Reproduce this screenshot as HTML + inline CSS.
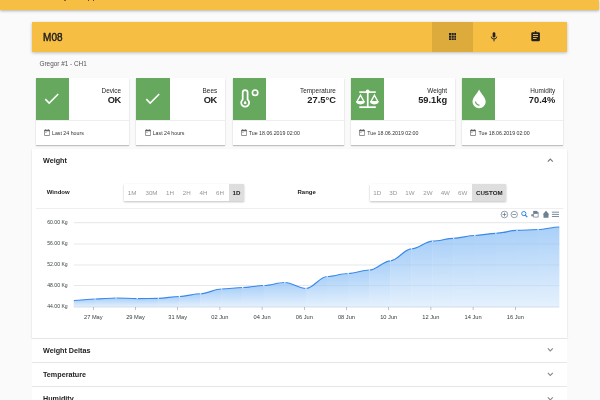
<!DOCTYPE html>
<html><head><meta charset="utf-8">
<style>
*{box-sizing:border-box;margin:0;padding:0}
html,body{width:600px;height:400px;overflow:hidden;background:#fafafa;font-family:"Liberation Sans",sans-serif;color:#222}
.abs{position:absolute}
#appbar{left:0;top:0;width:599px;height:10px;background:#f6bf43;box-shadow:0 1px 3px rgba(0,0,0,.3)}
#toolbar{left:32px;top:21.5px;width:535px;height:30.4px;background:#f6bf43;box-shadow:0 1px 3px rgba(0,0,0,.25)}
#toolbar .title{position:absolute;left:11px;top:10.3px;font-size:10px;font-weight:normal;-webkit-text-stroke:0.4px #1d1d1d;color:#1d1d1d;letter-spacing:0.1px}
.tbtn{position:absolute;top:0;height:30.4px;width:41px}
.tbtn.active{background:rgba(0,0,0,.1)}
.sub{left:39.5px;top:59.6px;font-size:6.4px;color:#555}
.card{position:absolute;top:77.7px;height:67px;background:#fff;box-shadow:0 1px 1px rgba(0,0,0,.18),0 0.5px 2px rgba(0,0,0,.1)}
.card .g{position:absolute;left:0;top:0;width:33.2px;height:42.1px;background:#66a85e}
.card .dv{position:absolute;left:0;right:0;top:42.2px;height:1px;background:#eee}
.card .lbl{position:absolute;right:7.9px;top:9.6px;font-size:6.4px;color:#2a2a2a;text-align:right;white-space:nowrap}
.card .val{position:absolute;right:7.9px;top:17.5px;font-size:9.3px;font-weight:bold;color:#222;text-align:right;white-space:nowrap}
.card .ft{position:absolute;left:7.9px;padding-left:8.4px;top:52.6px;font-size:5.25px;color:#333;white-space:nowrap}
.panel{position:absolute;left:32px;width:535px;background:#fff;box-shadow:0 1px 2px rgba(0,0,0,.15)}
.ph{position:absolute;left:11px;font-size:7.2px;font-weight:bold;color:#222}
.lab{position:absolute;font-size:6px;font-weight:bold;color:#222}
.bg{position:absolute;top:184.3px;height:16.6px;background:#fff;box-shadow:0 1px 2px rgba(0,0,0,.25)}
.bg .on{position:absolute;top:0;height:16.6px;background:#dedede}
.bg span{position:absolute;top:0.9px;width:30px;height:16.6px;line-height:16.6px;font-size:6.2px;color:#969696;text-align:center;white-space:nowrap}
.bg span.act{color:#222;font-weight:bold}
</style></head>
<body>
<div id="wrap" style="position:absolute;left:0;top:0;width:600px;height:400px;will-change:transform">
<div id="appbar" class="abs"><div class="abs" style="left:63.6px;top:0;width:2.2px;height:1.2px;border-radius:0 0 1px 1px;background:#5a4a20"></div><div class="abs" style="left:87.6px;top:0;width:1.4px;height:1.2px;background:#5a4a20"></div><div class="abs" style="left:92.8px;top:0;width:1.4px;height:1.2px;background:#5a4a20"></div></div>
<div id="toolbar" class="abs">
  <div class="title">M08</div>
  <div class="tbtn active" style="left:400px">
    <svg class="abs" style="left:16.8px;top:11.5px" width="7.4" height="7.4" viewBox="0 0 7.4 7.4" fill="#222">
      <rect x="0" y="0" width="2.1" height="2.1"/><rect x="2.65" y="0" width="2.1" height="2.1"/><rect x="5.3" y="0" width="2.1" height="2.1"/>
      <rect x="0" y="2.65" width="2.1" height="2.1"/><rect x="2.65" y="2.65" width="2.1" height="2.1"/><rect x="5.3" y="2.65" width="2.1" height="2.1"/>
      <rect x="0" y="5.3" width="2.1" height="2.1"/><rect x="2.65" y="5.3" width="2.1" height="2.1"/><rect x="5.3" y="5.3" width="2.1" height="2.1"/>
    </svg>
  </div>
  <div class="tbtn" style="left:441px">
    <svg class="abs" style="left:0;top:0" width="41" height="30.4" viewBox="473 21.5 41 30.4" fill="#222">
      <rect x="492.65" y="31.7" width="2.7" height="5.3" rx="1.35"/>
      <path d="M491.3 36.1v0.3a2.7 2.1 0 0 0 5.4 0v-0.3" stroke="#222" stroke-width="0.9" fill="none"/>
      <rect x="493.55" y="38.3" width="0.9" height="2.6"/>
    </svg>
  </div>
  <div class="tbtn" style="left:482px">
    <svg class="abs" style="left:0;top:0" width="41" height="30.4" viewBox="514 21.5 41 30.4" fill="#222">
      <rect x="531.3" y="31.8" width="8.6" height="9" rx="1.2"/>
      <circle cx="535.6" cy="31.5" r="0.9"/>
      <rect x="533" y="33.6" width="5" height="0.9" fill="#f6bf43"/>
      <rect x="533" y="35.6" width="5" height="0.9" fill="#f6bf43"/>
      <rect x="533" y="37.6" width="3.6" height="0.9" fill="#f6bf43"/>
    </svg>
  </div>
</div>
<div class="abs sub">Gregor #1 - CH1</div>
<div class="card" style="left:35.7px;width:93.3px">
  <div class="g"><svg class="abs" style="left:6.8px;top:11.5px" width="19.2" height="19.2" viewBox="0 0 24 24"><path d="M9 16.2L4.8 12l-1.4 1.4L9 19 21 7l-1.4-1.4L9 16.2z" fill="#fff"/></svg></div><div class="dv"></div>
  <div class="lbl">Device</div><div class="val" style="letter-spacing:-0.5px;right:8.3px">OK</div>
  <div class="ft"><svg width="6.1" height="6.9" viewBox="0 0 6.1 6.9" style="position:absolute;left:0.25px;top:-1.2px"><rect x="0.4" y="1.1" width="5.3" height="5.4" rx="0.4" fill="none" stroke="#555" stroke-width="0.65"/><rect x="0.4" y="1.1" width="5.3" height="1.15" fill="#555"/><rect x="1.2" y="0.3" width="0.6" height="0.9" fill="#555"/><rect x="4.3" y="0.3" width="0.6" height="0.9" fill="#555"/><rect x="1.1" y="3.1" width="1.5" height="0.55" fill="#777"/></svg>Last 24 hours</div>
</div>
<div class="card" style="left:136.4px;width:88.7px">
  <div class="g"><svg class="abs" style="left:6.8px;top:11.5px" width="19.2" height="19.2" viewBox="0 0 24 24"><path d="M9 16.2L4.8 12l-1.4 1.4L9 19 21 7l-1.4-1.4L9 16.2z" fill="#fff"/></svg></div><div class="dv"></div>
  <div class="lbl">Bees</div><div class="val" style="letter-spacing:-0.5px;right:8.3px">OK</div>
  <div class="ft"><svg width="6.1" height="6.9" viewBox="0 0 6.1 6.9" style="position:absolute;left:0.25px;top:-1.2px"><rect x="0.4" y="1.1" width="5.3" height="5.4" rx="0.4" fill="none" stroke="#555" stroke-width="0.65"/><rect x="0.4" y="1.1" width="5.3" height="1.15" fill="#555"/><rect x="1.2" y="0.3" width="0.6" height="0.9" fill="#555"/><rect x="4.3" y="0.3" width="0.6" height="0.9" fill="#555"/><rect x="1.1" y="3.1" width="1.5" height="0.55" fill="#777"/></svg>Last 24 hours</div>
</div>
<div class="card" style="left:232.5px;width:111.25px">
  <div class="g"><svg class="abs" style="left:0;top:0" width="33.5" height="41.5" viewBox="232.5 78.1 33.5 41.5"><path d="M242.2 99.7V92.6A2.45 2.45 0 0 1 247.1 92.6V99.7A3.98 3.98 0 1 1 242.2 99.7Z" fill="none" stroke="#fff" stroke-width="1.75"/><path d="M244.65 100.6l-1.2 2a1.3 1.3 0 1 0 2.4 0z" fill="#fff"/><circle cx="254.6" cy="92.75" r="2.7" fill="none" stroke="#fff" stroke-width="1.6"/></svg></div><div class="dv"></div>
  <div class="lbl">Temperature</div><div class="val">27.5°C</div>
  <div class="ft"><svg width="6.1" height="6.9" viewBox="0 0 6.1 6.9" style="position:absolute;left:0.25px;top:-1.2px"><rect x="0.4" y="1.1" width="5.3" height="5.4" rx="0.4" fill="none" stroke="#555" stroke-width="0.65"/><rect x="0.4" y="1.1" width="5.3" height="1.15" fill="#555"/><rect x="1.2" y="0.3" width="0.6" height="0.9" fill="#555"/><rect x="4.3" y="0.3" width="0.6" height="0.9" fill="#555"/><rect x="1.1" y="3.1" width="1.5" height="0.55" fill="#777"/></svg>Tue 18.06.2019 02:00</div>
</div>
<div class="card" style="left:351px;width:104px">
  <div class="g"><svg class="abs" style="left:0;top:0" width="33.5" height="41.5" viewBox="351 77.8 33.5 41.5" fill="#fff"><rect x="359.3" y="91.1" width="16.5" height="1.6"/><circle cx="367.7" cy="91.3" r="1.9"/><rect x="366.9" y="92" width="1.7" height="14.5"/><rect x="359.3" y="106.1" width="16.5" height="1.75"/><path d="M357.3 100.8L360.5 94.9L363.7 100.8" fill="none" stroke="#fff" stroke-width="1.4"/><path d="M356 100.9H364.9Q364.9 104.2 360.45 104.2Q356 104.2 356 100.9Z"/><path d="M371.2 100.8L374.4 94.9L377.6 100.8" fill="none" stroke="#fff" stroke-width="1.4"/><path d="M369.9 100.9H378.8Q378.8 104.2 374.35 104.2Q369.9 104.2 369.9 100.9Z"/></svg></div><div class="dv"></div>
  <div class="lbl">Weight</div><div class="val">59.1kg</div>
  <div class="ft"><svg width="6.1" height="6.9" viewBox="0 0 6.1 6.9" style="position:absolute;left:0.25px;top:-1.2px"><rect x="0.4" y="1.1" width="5.3" height="5.4" rx="0.4" fill="none" stroke="#555" stroke-width="0.65"/><rect x="0.4" y="1.1" width="5.3" height="1.15" fill="#555"/><rect x="1.2" y="0.3" width="0.6" height="0.9" fill="#555"/><rect x="4.3" y="0.3" width="0.6" height="0.9" fill="#555"/><rect x="1.1" y="3.1" width="1.5" height="0.55" fill="#777"/></svg>Tue 18.06.2019 02:00</div>
</div>
<div class="card" style="left:462.2px;width:100.9px">
  <div class="g"><svg class="abs" style="left:0;top:0" width="33.5" height="41.5" viewBox="462.2 77.8 33.5 41.5"><path d="M479.3 89.2C477.6 93 472.7 97 472.7 101.5A6.6 6.6 0 0 0 485.9 101.5C485.9 97 481 93 479.3 89.2Z" fill="#fff"/><path d="M475.7 101.3Q475.9 104.3 479.6 105.2" fill="none" stroke="#66a85e" stroke-width="1.25"/></svg></div><div class="dv"></div>
  <div class="lbl">Humidity</div><div class="val">70.4%</div>
  <div class="ft"><svg width="6.1" height="6.9" viewBox="0 0 6.1 6.9" style="position:absolute;left:0.25px;top:-1.2px"><rect x="0.4" y="1.1" width="5.3" height="5.4" rx="0.4" fill="none" stroke="#555" stroke-width="0.65"/><rect x="0.4" y="1.1" width="5.3" height="1.15" fill="#555"/><rect x="1.2" y="0.3" width="0.6" height="0.9" fill="#555"/><rect x="4.3" y="0.3" width="0.6" height="0.9" fill="#555"/><rect x="1.1" y="3.1" width="1.5" height="0.55" fill="#777"/></svg>Tue 18.06.2019 02:00</div>
</div>

<div class="panel" style="top:149px;height:188.5px">
  <div class="ph" style="top:7.2px">Weight</div>
</div>
<div class="lab" style="left:46.7px;top:189px">Window</div>
<div class="lab" style="left:297.5px;top:189px">Range</div>
<div class="bg" style="left:123.8px;width:120.2px"><div class="on" style="left:105.00000000000001px;width:15.199999999999989px"></div><span style="left:-6.799999999999997px">1M</span><span style="left:12.700000000000003px">30M</span><span style="left:31.200000000000003px">1H</span><span style="left:47.89999999999999px">2H</span><span style="left:64.7px">4H</span><span style="left:81.2px">6H</span><span class="act" style="left:97.7px">1D</span></div>
<div class="bg" style="left:369.9px;width:136.10000000000002px"><div class="on" style="left:102.10000000000002px;width:34px"></div><span style="left:-7.599999999999966px">1D</span><span style="left:8.400000000000034px">3D</span><span style="left:25.100000000000023px">1W</span><span style="left:43.10000000000002px">2W</span><span style="left:60.400000000000034px">4W</span><span style="left:77.80000000000001px">6W</span><span class="act" style="left:104.40000000000003px">CUSTOM</span></div>
<div class="panel" style="top:337.5px;height:25px;box-shadow:none;border-top:1px solid #e6e6e6">
  <div class="ph" style="top:7.0px">Weight Deltas</div>
</div>
<div class="panel" style="top:361.9px;height:25px;box-shadow:none;border-top:1px solid #e6e6e6">
  <div class="ph" style="top:7.0px">Temperature</div>
</div>
<div class="panel" style="top:386.2px;height:25px;box-shadow:none;border-top:1px solid #e6e6e6">
  <div class="ph" style="top:7.0px">Humidity</div>
</div>
<svg class="abs" style="left:0;top:0" width="600" height="400" viewBox="0 0 600 400"><defs><linearGradient id="ag" x1="0" y1="0" x2="0" y2="1" gradientUnits="objectBoundingBox"><stop offset="0" stop-color="#aad0f8"/><stop offset="1" stop-color="#e5f1fd"/></linearGradient></defs><rect x="36" y="208" width="527.5" height="0.8" fill="#ececec"/><rect x="73.9" y="222.4" width="485.3" height="0.8" fill="#efefef"/><rect x="73.9" y="243.6" width="485.3" height="0.8" fill="#efefef"/><rect x="73.9" y="264.6" width="485.3" height="0.8" fill="#efefef"/><rect x="73.9" y="285.0" width="485.3" height="0.8" fill="#efefef"/><path d="M73.70 300.50 L73.90 300.50 C81.28 300.50 87.62 299.00 95.00 299.00 L95.20 299.00 L95.20 307 L73.70 307 Z" fill="url(#ag)"/><path d="M94.80 299.00 L95.00 299.00 C102.39 299.00 108.72 298.00 116.10 298.00 L116.30 298.00 L116.30 307 L94.80 307 Z" fill="url(#ag)"/><path d="M115.90 298.00 L116.10 298.00 C123.49 298.00 129.82 298.60 137.20 298.60 L137.40 298.60 L137.40 307 L115.90 307 Z" fill="url(#ag)"/><path d="M137.00 298.60 L137.20 298.60 C144.59 298.60 150.92 298.30 158.30 298.30 L158.50 298.30 L158.50 307 L137.00 307 Z" fill="url(#ag)"/><path d="M158.10 298.30 L158.30 298.30 C165.69 298.30 172.02 296.50 179.40 296.50 L179.60 296.50 L179.60 307 L158.10 307 Z" fill="url(#ag)"/><path d="M179.20 296.50 L179.40 296.50 C186.78 296.50 193.12 293.70 200.50 293.70 L200.70 293.70 L200.70 307 L179.20 307 Z" fill="url(#ag)"/><path d="M200.30 293.70 L200.50 293.70 C207.89 293.70 214.22 289.00 221.60 289.00 L221.80 289.00 L221.80 307 L200.30 307 Z" fill="url(#ag)"/><path d="M221.40 289.00 L221.60 289.00 C228.99 289.00 235.32 287.50 242.70 287.50 L242.90 287.50 L242.90 307 L221.40 307 Z" fill="url(#ag)"/><path d="M242.50 287.50 L242.70 287.50 C250.09 287.50 256.42 285.50 263.80 285.50 L264.00 285.50 L264.00 307 L242.50 307 Z" fill="url(#ag)"/><path d="M263.60 285.50 L263.80 285.50 C271.19 285.50 277.51 282.50 284.90 282.50 L285.10 282.50 L285.10 307 L263.60 307 Z" fill="url(#ag)"/><path d="M284.70 282.50 L284.90 282.50 C292.28 282.50 298.62 288.50 306.00 288.50 L306.20 288.50 L306.20 307 L284.70 307 Z" fill="url(#ag)"/><path d="M305.80 288.50 L306.00 288.50 C313.38 288.50 319.72 276.50 327.10 276.50 L327.30 276.50 L327.30 307 L305.80 307 Z" fill="url(#ag)"/><path d="M326.90 276.50 L327.10 276.50 C334.49 276.50 340.82 273.50 348.20 273.50 L348.40 273.50 L348.40 307 L326.90 307 Z" fill="url(#ag)"/><path d="M348.00 273.50 L348.20 273.50 C355.59 273.50 361.92 270.00 369.30 270.00 L369.50 270.00 L369.50 307 L348.00 307 Z" fill="url(#ag)"/><path d="M369.10 270.00 L369.30 270.00 C376.69 270.00 383.01 260.80 390.40 260.80 L390.60 260.80 L390.60 307 L369.10 307 Z" fill="url(#ag)"/><path d="M390.20 260.80 L390.40 260.80 C397.78 260.80 404.12 248.80 411.50 248.80 L411.70 248.80 L411.70 307 L390.20 307 Z" fill="url(#ag)"/><path d="M411.30 248.80 L411.50 248.80 C418.88 248.80 425.22 241.20 432.60 241.20 L432.80 241.20 L432.80 307 L411.30 307 Z" fill="url(#ag)"/><path d="M432.40 241.20 L432.60 241.20 C439.99 241.20 446.32 238.30 453.70 238.30 L453.90 238.30 L453.90 307 L432.40 307 Z" fill="url(#ag)"/><path d="M453.50 238.30 L453.70 238.30 C461.09 238.30 467.42 235.50 474.80 235.50 L475.00 235.50 L475.00 307 L453.50 307 Z" fill="url(#ag)"/><path d="M474.60 235.50 L474.80 235.50 C482.19 235.50 488.51 233.30 495.90 233.30 L496.10 233.30 L496.10 307 L474.60 307 Z" fill="url(#ag)"/><path d="M495.70 233.30 L495.90 233.30 C503.28 233.30 509.62 230.40 517.00 230.40 L517.20 230.40 L517.20 307 L495.70 307 Z" fill="url(#ag)"/><path d="M516.80 230.40 L517.00 230.40 C524.38 230.40 530.72 229.50 538.10 229.50 L538.30 229.50 L538.30 307 L516.80 307 Z" fill="url(#ag)"/><path d="M537.90 229.50 L538.10 229.50 C545.49 229.50 551.82 227.00 559.20 227.00 L559.40 227.00 L559.40 307 L537.90 307 Z" fill="url(#ag)"/><rect x="73.9" y="222.4" width="485.3" height="0.7" fill="rgba(90,120,160,0.12)"/><rect x="73.9" y="243.6" width="485.3" height="0.7" fill="rgba(90,120,160,0.12)"/><rect x="73.9" y="264.6" width="485.3" height="0.7" fill="rgba(90,120,160,0.12)"/><rect x="73.9" y="285.0" width="485.3" height="0.7" fill="rgba(90,120,160,0.12)"/><path d="M73.90 300.50 C81.28 300.50 87.62 299.00 95.00 299.00 C102.39 299.00 108.72 298.00 116.10 298.00 C123.49 298.00 129.82 298.60 137.20 298.60 C144.59 298.60 150.92 298.30 158.30 298.30 C165.69 298.30 172.02 296.50 179.40 296.50 C186.78 296.50 193.12 293.70 200.50 293.70 C207.89 293.70 214.22 289.00 221.60 289.00 C228.99 289.00 235.32 287.50 242.70 287.50 C250.09 287.50 256.42 285.50 263.80 285.50 C271.19 285.50 277.51 282.50 284.90 282.50 C292.28 282.50 298.62 288.50 306.00 288.50 C313.38 288.50 319.72 276.50 327.10 276.50 C334.49 276.50 340.82 273.50 348.20 273.50 C355.59 273.50 361.92 270.00 369.30 270.00 C376.69 270.00 383.01 260.80 390.40 260.80 C397.78 260.80 404.12 248.80 411.50 248.80 C418.88 248.80 425.22 241.20 432.60 241.20 C439.99 241.20 446.32 238.30 453.70 238.30 C461.09 238.30 467.42 235.50 474.80 235.50 C482.19 235.50 488.51 233.30 495.90 233.30 C503.28 233.30 509.62 230.40 517.00 230.40 C524.38 230.40 530.72 229.50 538.10 229.50 C545.49 229.50 551.82 227.00 559.20 227.00" fill="none" stroke="#3a88ea" stroke-width="1.15"/><circle cx="95.0" cy="299" r="0.75" fill="rgba(255,255,255,0.85)"/><circle cx="116.10000000000001" cy="298" r="0.75" fill="rgba(255,255,255,0.85)"/><circle cx="137.20000000000002" cy="298.6" r="0.75" fill="rgba(255,255,255,0.85)"/><circle cx="158.3" cy="298.3" r="0.75" fill="rgba(255,255,255,0.85)"/><circle cx="179.4" cy="296.5" r="0.75" fill="rgba(255,255,255,0.85)"/><circle cx="200.5" cy="293.7" r="0.75" fill="rgba(255,255,255,0.85)"/><circle cx="221.60000000000002" cy="289" r="0.75" fill="rgba(255,255,255,0.85)"/><circle cx="242.70000000000002" cy="287.5" r="0.75" fill="rgba(255,255,255,0.85)"/><circle cx="263.8" cy="285.5" r="0.75" fill="rgba(255,255,255,0.85)"/><circle cx="284.9" cy="282.5" r="0.75" fill="rgba(255,255,255,0.85)"/><circle cx="306.0" cy="288.5" r="0.75" fill="rgba(255,255,255,0.85)"/><circle cx="327.1" cy="276.5" r="0.75" fill="rgba(255,255,255,0.85)"/><circle cx="348.20000000000005" cy="273.5" r="0.75" fill="rgba(255,255,255,0.85)"/><circle cx="369.30000000000007" cy="270" r="0.75" fill="rgba(255,255,255,0.85)"/><circle cx="390.4" cy="260.8" r="0.75" fill="rgba(255,255,255,0.85)"/><circle cx="411.5" cy="248.8" r="0.75" fill="rgba(255,255,255,0.85)"/><circle cx="432.6" cy="241.2" r="0.75" fill="rgba(255,255,255,0.85)"/><circle cx="453.70000000000005" cy="238.3" r="0.75" fill="rgba(255,255,255,0.85)"/><circle cx="474.80000000000007" cy="235.5" r="0.75" fill="rgba(255,255,255,0.85)"/><circle cx="495.9" cy="233.3" r="0.75" fill="rgba(255,255,255,0.85)"/><circle cx="517.0" cy="230.4" r="0.75" fill="rgba(255,255,255,0.85)"/><circle cx="538.1" cy="229.5" r="0.75" fill="rgba(255,255,255,0.85)"/><rect x="73.9" y="306.6" width="485.3" height="0.8" fill="#c9d6e6"/><rect x="93.0" y="307" width="0.6" height="3" fill="#999"/><rect x="135.2" y="307" width="0.6" height="3" fill="#999"/><rect x="177.39999999999998" y="307" width="0.6" height="3" fill="#999"/><rect x="219.6" y="307" width="0.6" height="3" fill="#999"/><rect x="261.8" y="307" width="0.6" height="3" fill="#999"/><rect x="304.0" y="307" width="0.6" height="3" fill="#999"/><rect x="346.2" y="307" width="0.6" height="3" fill="#999"/><rect x="388.40000000000003" y="307" width="0.6" height="3" fill="#999"/><rect x="430.6" y="307" width="0.6" height="3" fill="#999"/><rect x="472.8" y="307" width="0.6" height="3" fill="#999"/><rect x="515.0" y="307" width="0.6" height="3" fill="#999"/><text x="67.7" y="224.20000000000002" text-anchor="end" font-size="5.1" fill="#373d3f" font-family="Liberation Sans">60.00 Kg</text><text x="67.7" y="245.4" text-anchor="end" font-size="5.1" fill="#373d3f" font-family="Liberation Sans">56.00 Kg</text><text x="67.7" y="266.4" text-anchor="end" font-size="5.1" fill="#373d3f" font-family="Liberation Sans">52.00 Kg</text><text x="67.7" y="286.79999999999995" text-anchor="end" font-size="5.1" fill="#373d3f" font-family="Liberation Sans">48.00 Kg</text><text x="67.7" y="307.79999999999995" text-anchor="end" font-size="5.1" fill="#373d3f" font-family="Liberation Sans">44.00 Kg</text><text x="93.3" y="318.7" text-anchor="middle" font-size="5.7" fill="#373d3f" font-family="Liberation Sans">27 May</text><text x="135.5" y="318.7" text-anchor="middle" font-size="5.7" fill="#373d3f" font-family="Liberation Sans">29 May</text><text x="177.7" y="318.7" text-anchor="middle" font-size="5.7" fill="#373d3f" font-family="Liberation Sans">31 May</text><text x="219.9" y="318.7" text-anchor="middle" font-size="5.7" fill="#373d3f" font-family="Liberation Sans">02 Jun</text><text x="262.1" y="318.7" text-anchor="middle" font-size="5.7" fill="#373d3f" font-family="Liberation Sans">04 Jun</text><text x="304.3" y="318.7" text-anchor="middle" font-size="5.7" fill="#373d3f" font-family="Liberation Sans">06 Jun</text><text x="346.5" y="318.7" text-anchor="middle" font-size="5.7" fill="#373d3f" font-family="Liberation Sans">08 Jun</text><text x="388.70000000000005" y="318.7" text-anchor="middle" font-size="5.7" fill="#373d3f" font-family="Liberation Sans">10 Jun</text><text x="430.90000000000003" y="318.7" text-anchor="middle" font-size="5.7" fill="#373d3f" font-family="Liberation Sans">12 Jun</text><text x="473.1" y="318.7" text-anchor="middle" font-size="5.7" fill="#373d3f" font-family="Liberation Sans">14 Jun</text><text x="515.3" y="318.7" text-anchor="middle" font-size="5.7" fill="#373d3f" font-family="Liberation Sans">16 Jun</text><circle cx="504.4" cy="214.5" r="3.3" fill="none" stroke="#6e8192" stroke-width="0.75"/><rect x="502.5" y="214.1" width="3.8" height="0.8" fill="#6e8192"/><rect x="504" y="212.6" width="0.8" height="3.8" fill="#6e8192"/><circle cx="514.25" cy="214.5" r="3.2" fill="none" stroke="#6e8192" stroke-width="0.75"/><rect x="512.4" y="214.1" width="3.7" height="0.8" fill="#6e8192"/><circle cx="523.8" cy="213.6" r="2.1" fill="none" stroke="#2b8ae8" stroke-width="1"/><path d="M525.3 215.1l2 2" stroke="#2b8ae8" stroke-width="1.3"/><rect x="533.2" y="210.9" width="4" height="3" fill="#6e8192"/><rect x="537.1" y="211.8" width="1.4" height="2" fill="#6e8192"/><path d="M533.6 213.6V217.1H538.2V213.6" fill="none" stroke="#6e8192" stroke-width="0.75"/><ellipse cx="532.3" cy="215.2" rx="1.1" ry="1.2" fill="#6e8192" opacity="0.85"/><path d="M542.7 214.6L546 210.7L549.3 214.6H548.5V217.8H543.5V214.6Z" fill="#6e8192"/><rect x="551.9" y="211.7" width="7.1" height="0.9" fill="#6e8192"/><rect x="551.9" y="213.9" width="7.1" height="0.9" fill="#6e8192"/><rect x="551.9" y="216.1" width="7.1" height="0.9" fill="#6e8192"/><path d="M547.8 161.6l2.5-2.5 2.5 2.5" fill="none" stroke="#777" stroke-width="1.1"/><path d="M547.8 348.40000000000003l2.5 2.5 2.5-2.5" fill="none" stroke="#888" stroke-width="1.1"/><path d="M547.8 372.90000000000003l2.5 2.5 2.5-2.5" fill="none" stroke="#888" stroke-width="1.1"/><path d="M547.8 397.40000000000003l2.5 2.5 2.5-2.5" fill="none" stroke="#888" stroke-width="1.1"/></svg>
</div>
</body></html>
